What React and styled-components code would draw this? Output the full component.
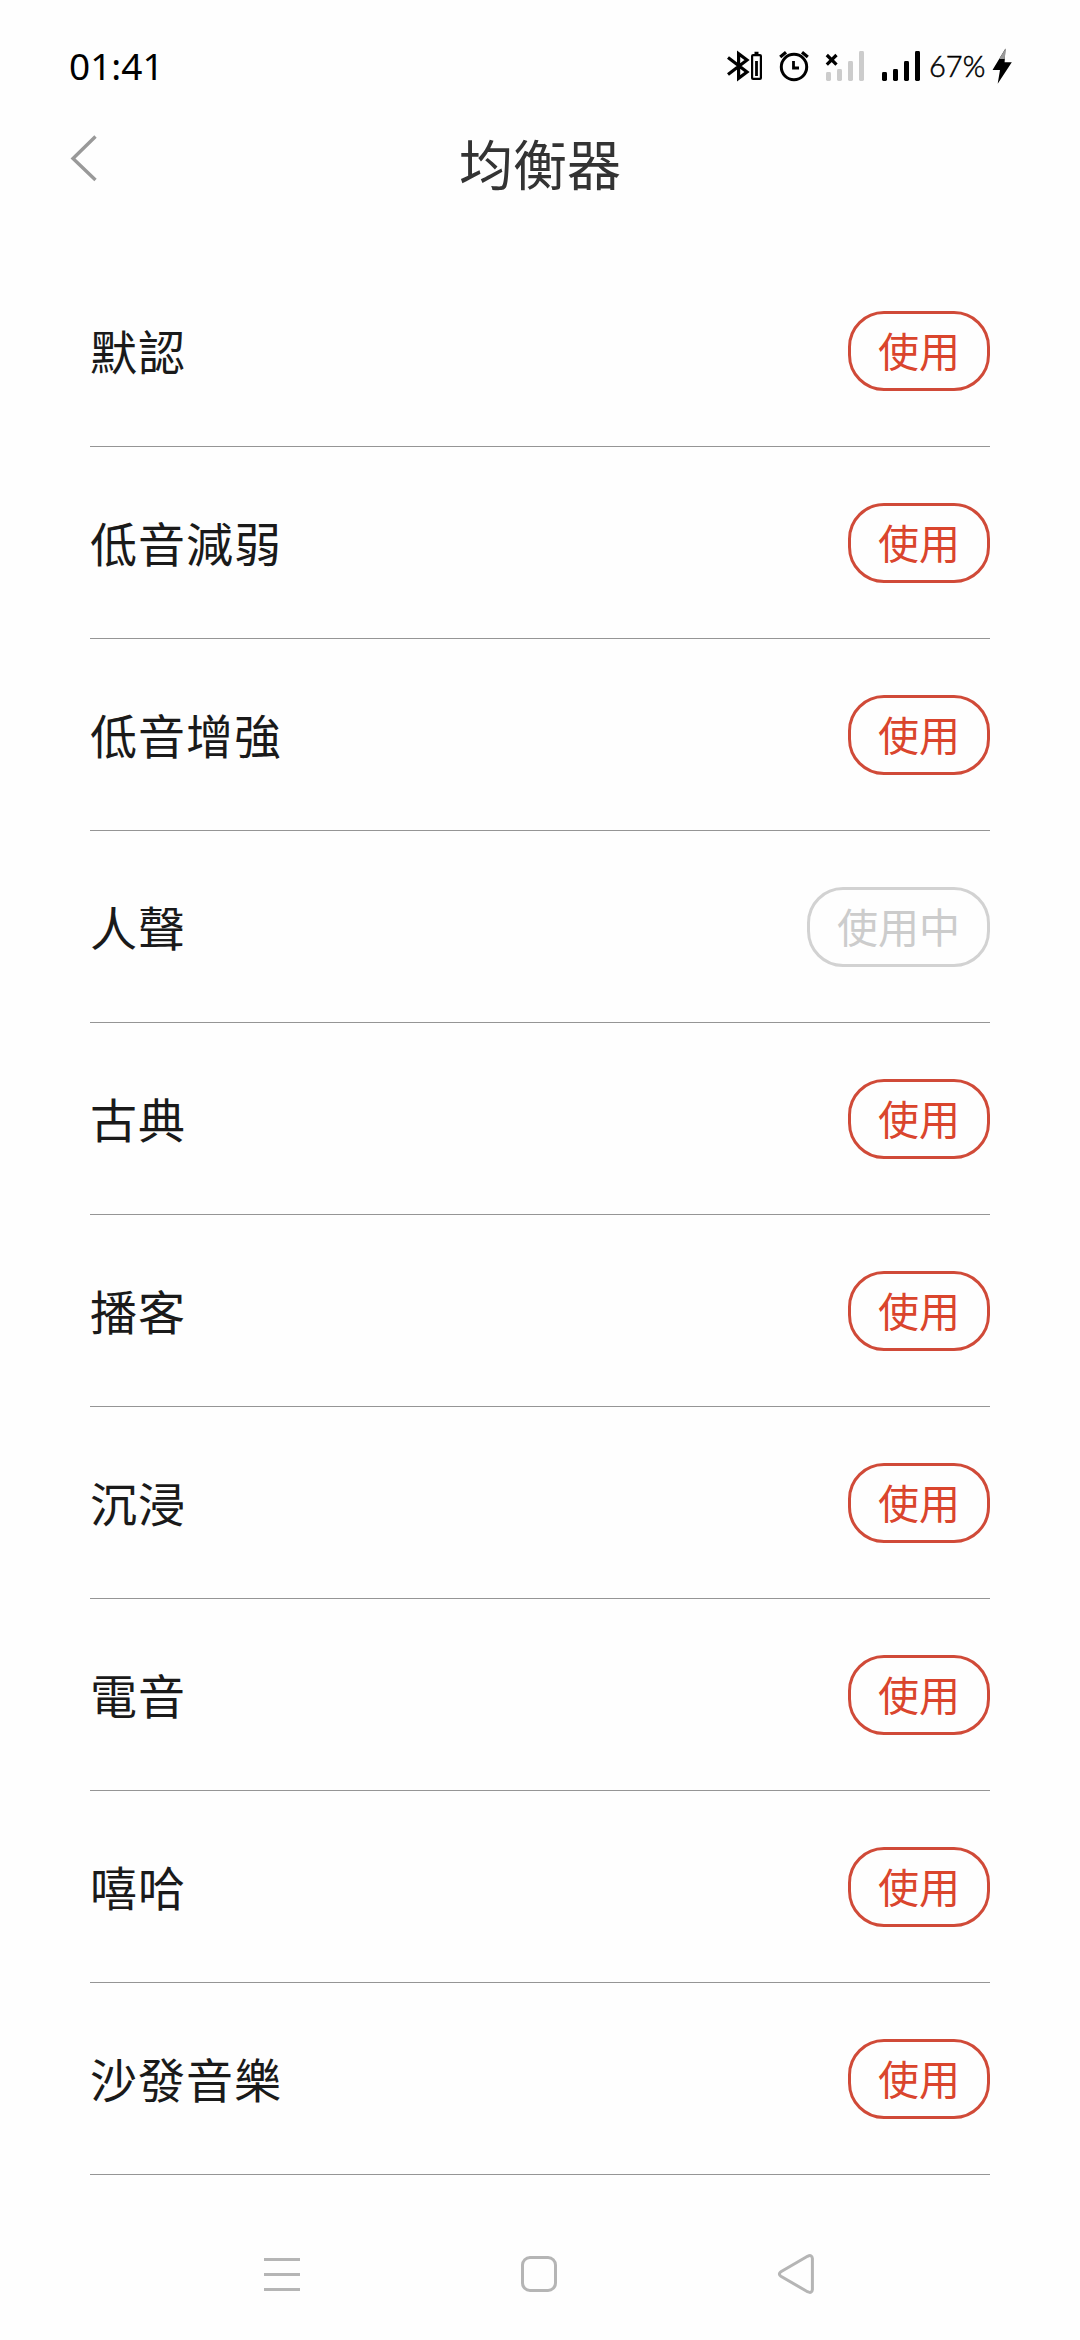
import React from 'react'
import styled, { createGlobalStyle } from 'styled-components'

const presets = [
    { name: '默認' },
    { name: '低音減弱' },
    { name: '低音增強' },
    { name: '人聲', active: true },
    { name: '古典' },
    { name: '播客' },
    { name: '沉浸' },
    { name: '電音' },
    { name: '嘻哈' },
    { name: '沙發音樂' },
]

function BluetoothIcon() {
    return (
        <svg width="40" height="34" viewBox="0 0 40 34" fill="none" stroke="#000" strokeWidth="3.2">
            <path d="M3 8.5 22 23 13.6 29.3V4.7L22 11 3 25.5" />
            <rect x="27.1" y="6.1" width="8.8" height="23.8" rx="1" strokeWidth="2.2" />
            <path d="M29.5 4.2h4M31.5 12v15" strokeWidth="2.8" />
        </svg>
    )
}

function AlarmIcon() {
    return (
        <svg width="34" height="34" viewBox="0 0 34 34" fill="none" stroke="#000" strokeWidth="3">
            <circle cx="17" cy="18" r="12.7" />
            <path d="M3.2 8 9 3.2M25 3.2 30.8 8" strokeWidth="3.2" />
            <path d="M16.5 12v7h5.5" strokeWidth="2.8" />
        </svg>
    )
}

function SignalIcon({ color, empty }) {
    return (
        <svg width="44" height="34" viewBox="0 0 44 34" fill={color}>
            <rect x="3" y="23" width="5" height="9" rx="1.4" />
            <rect x="14" y="20" width="5" height="12" rx="1.4" />
            <rect x="25" y="12" width="5" height="20" rx="1.4" />
            <rect x="36" y="2" width="5" height="30" rx="1.4" />
            {empty && (
                <path d="M3.8 6 13.5 15.7M13.5 6 3.8 15.7" stroke="#000" strokeWidth="3.2" />
            )}
        </svg>
    )
}

function BoltIcon() {
    return (
        <svg width="22" height="38" viewBox="0 0 22 38">
            <path d="M13.5 1.5 0.5 23H8L5.7 36.8 19.8 15.2H12.6z" fill="#000" />
            <path d="M13.5 1.5 7.1 12H12.8z" fill="#999" />
        </svg>
    )
}

export default function App() {
    return (
        <Screen>
            <GlobalStyle />
            <StatusBar>
                <Time>01:41</Time>
                <StatusIcons>
                    <BluetoothIcon />
                    <AlarmIcon />
                    <SignalIcon color="#ccc" empty />
                    <SignalIcon color="#000" />
                </StatusIcons>
                <Battery>67%</Battery>
                <BoltIcon />
            </StatusBar>
            <Header>
                <BackButton aria-label="返回">
                    <svg width="28" height="48" viewBox="0 0 28 48" fill="none" stroke="#999" strokeWidth="3.4">
                        <path d="M25.5 2.5 3 24.5 25.5 46" />
                    </svg>
                </BackButton>
                <Title>均衡器</Title>
            </Header>
            <List>
                {presets.map((preset) => (
                    <Row key={preset.name}>
                        <Name>{preset.name}</Name>
                        <UseButton $active={preset.active}>
                            {preset.active ? '使用中' : '使用'}
                        </UseButton>
                    </Row>
                ))}
            </List>
            <NavBar>
                <svg width="40" height="44" viewBox="0 0 40 44" fill="none" stroke="#b5b5b5" strokeWidth="3">
                    <path d="M2 7.5h36M2 22.5h36M2 37.5h36" />
                </svg>
                <svg width="40" height="44" viewBox="0 0 40 44" fill="none" stroke="#b5b5b5" strokeWidth="3">
                    <rect x="3.5" y="5.5" width="33" height="33" rx="7.5" />
                </svg>
                <svg width="40" height="44" viewBox="0 0 40 44" fill="none" stroke="#b5b5b5" strokeWidth="3">
                    <path d="M31.5 4.3 4.9 19.7Q1.8 22 4.9 24.3L31.5 39.7Q36 41.8 36.4 37.5V6.5Q36 2.2 31.5 4.3z" />
                </svg>
            </NavBar>
        </Screen>
    )
}

const GlobalStyle = createGlobalStyle`
    body {
        margin: 0;
        background: #fefefe;
    }
    svg {
        display: block;
        flex-shrink: 0;
    }
`

const Screen = styled.div`
    display: flex;
    flex-direction: column;
    box-sizing: border-box;
    width: 1080px;
    height: 2340px;
    background: #fefefe;
    font-family: 'Noto Sans', 'Noto Sans CJK SC', sans-serif;
`

const StatusBar = styled.div`
    display: flex;
    align-items: center;
    box-sizing: border-box;
    height: 108px;
    padding: 24px 66px 0 69px;
    color: #000;
`

const Time = styled.div`
    margin-right: auto;
    font-size: 37px;
    line-height: 50px;
`

const StatusIcons = styled.div`
    display: flex;
    align-items: center;
    gap: 12px;
`

const Battery = styled.div`
    width: 60px;
    margin: 0 3px 0 6px;
    font-family: Lato, sans-serif;
    font-size: 29px;
    font-weight: 300;
    line-height: 40px;
    white-space: nowrap;
    -webkit-text-stroke: 0.5px #000;
`

const Header = styled.header`
    display: grid;
    grid-template-columns: 100px 1fr 100px;
    height: 147px;
`

const BackButton = styled.button`
    align-self: start;
    margin: 26px 0 0;
    padding: 0 0 0 70px;
    border: 0;
    background: none;
`

const Title = styled.h1`
    margin: 17px 0 0;
    color: #333;
    font-size: 54px;
    font-weight: 400;
    line-height: 80px;
    text-align: center;
`

const List = styled.div`
    padding: 0 90px;
`

const Row = styled.div`
    display: flex;
    align-items: center;
    justify-content: space-between;
    box-sizing: border-box;
    height: 192px;
    border-bottom: 1px solid #959595;
`

const Name = styled.span`
    padding-top: 2px;
    color: #1a1a1a;
    font-size: 47px;
    line-height: 72px;
    letter-spacing: 1px;
`

const UseButton = styled.button`
    box-sizing: border-box;
    height: 80px;
    padding: 0 27px;
    border: 3px solid ${(props) => (props.$active ? '#d2d2d2' : '#d04a38')};
    border-radius: 36px;
    background: none;
    color: ${(props) => (props.$active ? '#ccc' : '#da452d')};
    font-family: inherit;
    font-size: 41px;
    line-height: 60px;
`

const NavBar = styled.nav`
    display: flex;
    justify-content: space-between;
    padding: 77px 264px 0 262px;
`
